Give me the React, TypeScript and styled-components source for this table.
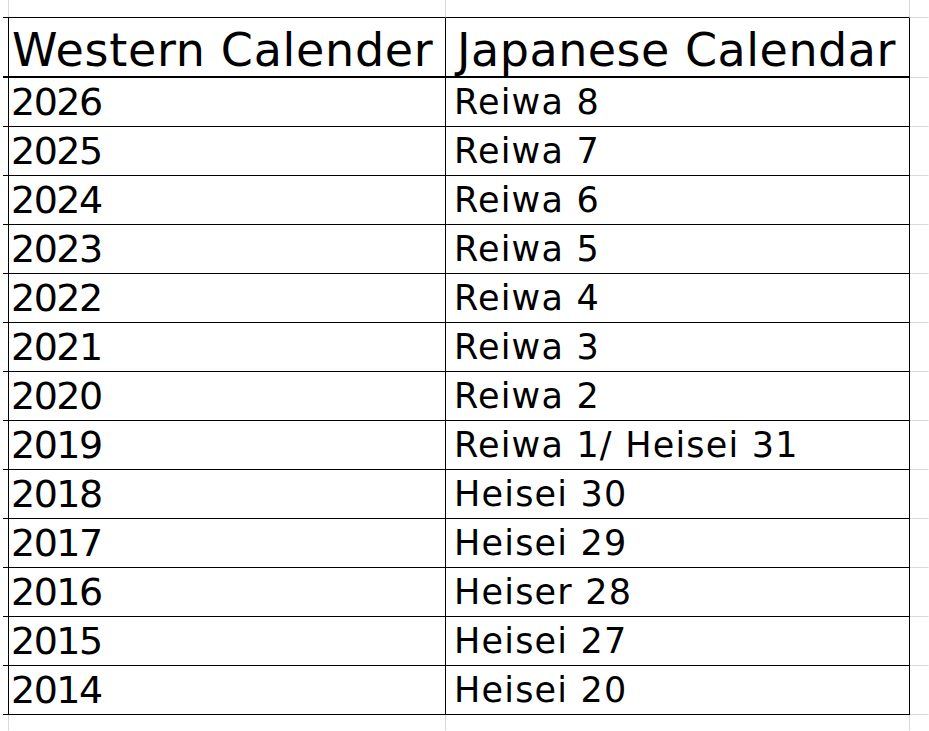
import React from "react";
import styled, { createGlobalStyle } from "styled-components";

const INK = "#000000";
const GRID = "#d9d9d9";

const Global = createGlobalStyle`
  html, body { margin: 0; padding: 0; background: #ffffff; }
  body { font-family: "DejaVu Sans", Verdana, sans-serif; color: #000; }
`;

const Sheet = styled.div`
  display: grid;
  grid-template-columns: 3px 443px 464px 1fr;
  grid-template-rows: 18px 60px repeat(13, 49px) 1fr;
  height: 731px;
  width: 929px;
  overflow: hidden;
  background: #fff;
`;

type Line = "ink" | "grid" | "none";

const lineColor = (l?: Line) =>
  l === "ink" ? INK : l === "grid" ? GRID : "transparent";

const Cell = styled.div<{
  $right?: Line;
  $bottom?: Line;
  $thick?: boolean;
  $size?: number;
  $pad?: number;
  $left?: number;
  $spacing?: number;
}>`
  box-sizing: border-box;
  min-width: 0;
  display: flex;
  align-items: flex-end;
  white-space: nowrap;
  overflow: visible;
  border-right: 1px solid ${(p) => lineColor(p.$right)};
  border-bottom: ${(p) => (p.$thick ? 2 : 1)}px solid ${(p) => lineColor(p.$bottom)};
  font-size: ${(p) => p.$size ?? 16}px;
  line-height: 1;
  letter-spacing: ${(p) => p.$spacing ?? 0}px;
  padding: 0 0 ${(p) => p.$pad ?? 0}px ${(p) => p.$left ?? 8}px;
`;

const rows: [string, string][] = [
  ["2026", "Reiwa 8"],
  ["2025", "Reiwa 7"],
  ["2024", "Reiwa 6"],
  ["2023", "Reiwa 5"],
  ["2022", "Reiwa 4"],
  ["2021", "Reiwa 3"],
  ["2020", "Reiwa 2"],
  ["2019", "Reiwa 1/ Heisei 31"],
  ["2018", "Heisei 30"],
  ["2017", "Heisei 29"],
  ["2016", "Heiser 28"],
  ["2015", "Heisei 27"],
  ["2014", "Heisei 20"],
];

export default function App() {
  return (
    <>
      <Global />
      <Sheet>
        {/* top strip */}
        <Cell $right="grid" $bottom="none" />
        <Cell $right="grid" $bottom="ink" />
        <Cell $right="grid" $bottom="ink" />
        <Cell $bottom="grid" />

        {/* header */}
        <Cell $right="ink" $bottom="none" />
        <Cell $right="ink" $bottom="ink" $thick $size={46} $pad={3} $spacing={0.7} $left={9}>
          Western Calender
        </Cell>
        <Cell $right="ink" $bottom="ink" $thick $size={46} $pad={3} $spacing={0.5} $left={11}>
          Japanese Calendar
        </Cell>
        <Cell $bottom="grid" />

        {rows.map(([w, j]) => (
          <React.Fragment key={w}>
            <Cell $right="ink" $bottom="none" />
            <Cell $right="ink" $bottom="ink" $size={38} $pad={5} $spacing={-1.5}>
              {w}
            </Cell>
            <Cell $right="ink" $bottom="ink" $size={35} $pad={6} $spacing={1.2}>
              {j}
            </Cell>
            <Cell $bottom="grid" />
          </React.Fragment>
        ))}

        {/* bottom strip */}
        <Cell $right="grid" $bottom="none" />
        <Cell $right="grid" $bottom="none" />
        <Cell $right="grid" $bottom="none" />
        <Cell $bottom="none" />
      </Sheet>
    </>
  );
}
